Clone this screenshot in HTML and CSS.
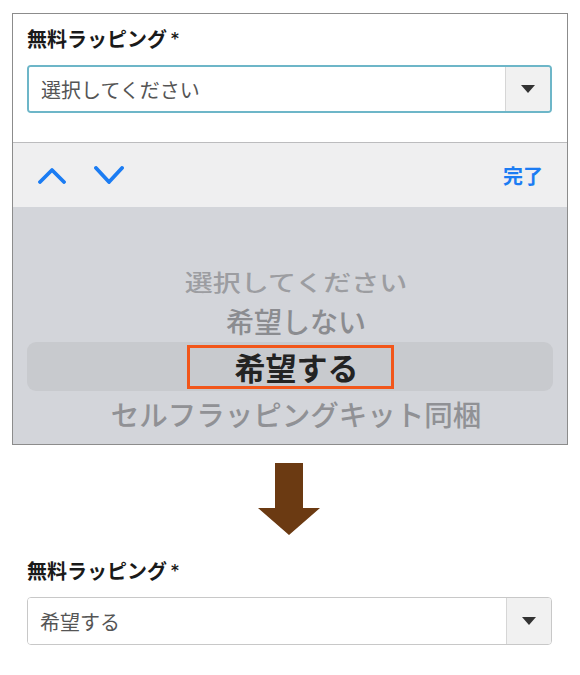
FILE: index.html
```html
<!DOCTYPE html>
<html>
<head>
  <meta charset="UTF-8">
  <title>無料ラッピング</title>
  <link rel="stylesheet" href="styles.css">
</head>
<body>
  <div class="frame">
    <div class="field">
      <div class="label">無料ラッピング<span class="req">*</span></div>
      <div class="select select-focus">
        <span class="select-value">選択してください</span>
        <span class="select-btn"><span class="caret"></span></span>
      </div>
    </div>

    <div class="toolbar">
      <div class="nav">
        <svg class="chev" width="28" height="17" viewBox="0 0 28 17">
          <polyline points="2,15 14,3 26,15" />
        </svg>
        <svg class="chev" width="30" height="18" viewBox="0 0 30 18">
          <polyline points="2,2 15,16 28,2" />
        </svg>
      </div>
      <span class="done">完了</span>
    </div>

    <div class="picker">
      <div class="row row-far"><span>選択してください</span></div>
      <div class="row row-near">希望しない</div>
      <div class="row row-selected"><span class="mark">希望する</span></div>
      <div class="row row-next">セルフラッピングキット同梱</div>
    </div>
  </div>

  <div class="arrow">
    <svg width="62" height="72" viewBox="0 0 62 72">
      <polygon points="17,0 45,0 45,45 62,45 31,72 0,45 17,45" fill="#6b3a12" />
    </svg>
  </div>

  <div class="field field-result">
    <div class="label">無料ラッピング<span class="req">*</span></div>
    <div class="select">
      <span class="select-value">希望する</span>
      <span class="select-btn"><span class="caret"></span></span>
    </div>
  </div>
</body>
</html>
```

FILE: styles.css
```css
/* フォームとピッカーの再現 */
body {
  margin: 0;
  background-color: #fff;
  color: #222;
  font-family: "Noto Sans CJK JP", "Noto Sans", sans-serif;
}
.frame {
  width: 556px;
  height: 432px;
  margin: 13px 0 0 12px;
  border: 1px solid #8c8c8c;
  box-sizing: border-box;
  overflow: hidden;
}
.field {
  padding: 13px 15px 29px 14px;
}
.field-result {
  padding: 24px 28px 0 27px;
}
.label {
  height: 24px;
  font-size: 20px;
  font-weight: bold;
  line-height: 24px;
  color: #1a1a1a;
}
.req {
  display: inline-block;
  font-family: "DejaVu Sans", sans-serif;
  font-size: 15px;
  line-height: 1;
  margin-left: 4px;
  vertical-align: 3px;
}
.select {
  display: flex;
  height: 48px;
  margin-top: 14px;
  border: 1px solid #c8c8c8;
  border-radius: 4px;
  box-sizing: border-box;
  overflow: hidden;
}
.select-focus {
  border: 2px solid #6db6c8;
}
.select-value {
  flex: 1;
  display: flex;
  align-items: center;
  padding-left: 12px;
  font-size: 20px;
  color: #555;
  background-color: #fff;
}
.select-btn {
  width: 44px;
  display: flex;
  align-items: center;
  justify-content: center;
  background-color: #f1f1f1;
  border-left: 1px solid #d6d6d6;
}
.caret {
  width: 0;
  height: 0;
  border-left: 7px solid transparent;
  border-right: 7px solid transparent;
  border-top: 8px solid #333;
}
.toolbar {
  height: 65px;
  box-sizing: border-box;
  border-top: 1px solid #bcbcbe;
  background-color: #efeff0;
  display: flex;
  align-items: center;
  justify-content: space-between;
  padding: 0 24px 0 25px;
}
.nav {
  display: flex;
  align-items: center;
  gap: 28px;
}
.chev polyline {
  fill: none;
  stroke: #1b7cf3;
  stroke-width: 3.8;
  stroke-linecap: round;
  stroke-linejoin: round;
}
.done {
  font-size: 20px;
  font-weight: bold;
  color: #1b7cf3;
}
.picker {
  height: 237px;
  background-color: #d3d5da;
  padding-top: 55px;
  box-sizing: border-box;
}
.row {
  display: flex;
  align-items: center;
  justify-content: center;
  padding-left: 12px;
  font-weight: 500;
  line-height: 1;
}
.row-far {
  height: 38px;
  font-size: 28px;
  color: #9c9da1;
}
.row-far span {
  display: inline-block;
  transform: scaleY(0.8);
}
.row-near {
  height: 42px;
  font-size: 28px;
  color: #8b8c90;
}
.row-selected {
  height: 49px;
  margin: 0 14px;
  padding-left: 0;
  border-radius: 9px;
  background-color: #c8cace;
}
.mark {
  font-size: 31px;
  font-weight: bold;
  color: #232323;
  border: 3px solid #f2561a;
  padding: 2px 32px 2px 45px;
  line-height: 34px;
}
.row-next {
  height: 46px;
  font-size: 28.5px;
  color: #909195;
}
.arrow {
  margin-top: 18px;
  padding-left: 258px;
  height: 72px;
}
.arrow svg {
  display: block;
}
```
